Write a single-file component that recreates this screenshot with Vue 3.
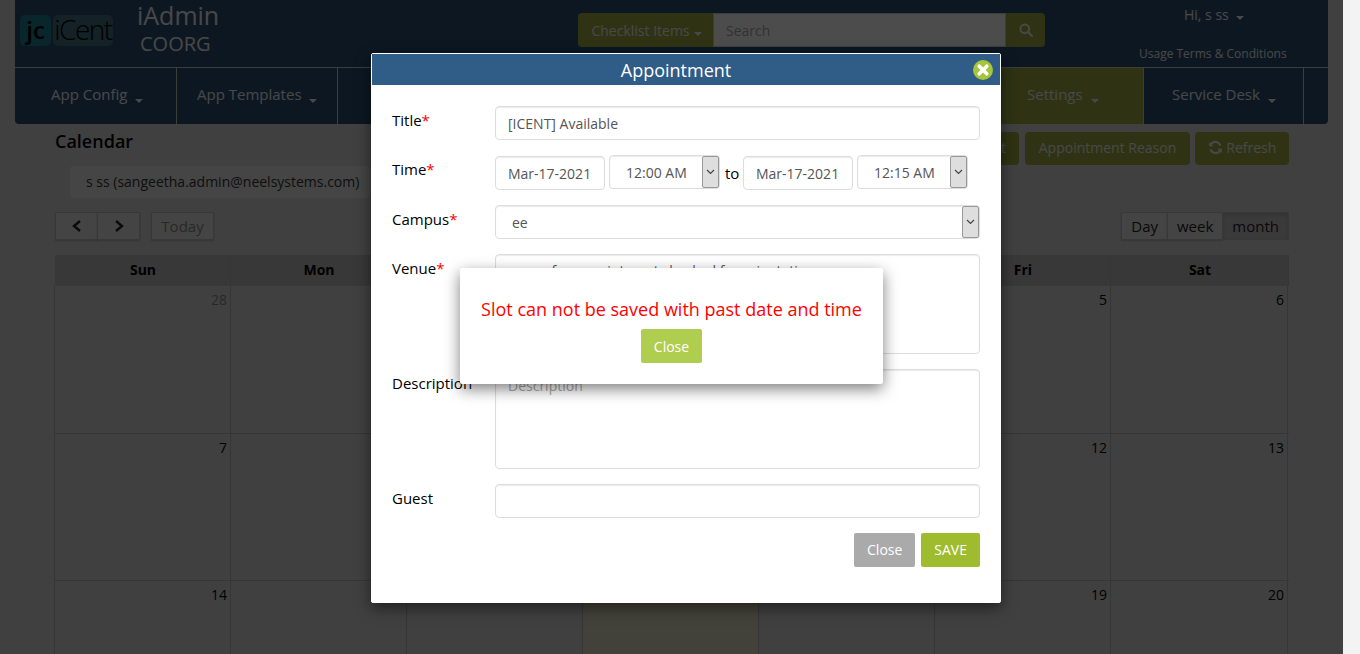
<script setup>
import { computed } from 'vue'

const days = ['Sun', 'Mon', 'Tue', 'Wed', 'Thu', 'Fri', 'Sat']

const weeks = computed(() => {
  const rows = []
  let current = [{ n: 28, muted: true }]
  for (let n = 1; n <= 27; n++) {
    current.push({ n, current: n === 17 })
    if (current.length === 7) {
      rows.push(current)
      current = []
    }
  }
  return rows
})
</script>

<template>
  <div class="screen">
    <div class="page">
      <div class="shell">
        <header class="top">
          <div class="logo">
            <span class="logo-mark">jc</span>
            <span class="logo-name">iCent</span>
          </div>
          <div class="brand">
            <div class="brand-name">iAdmin</div>
            <div class="brand-sub">COORG</div>
          </div>
          <div class="search">
            <button class="search-type">Checklist Items<i class="caret small"></i></button>
            <input class="search-input" placeholder="Search" />
            <button class="search-go">
              <svg width="14" height="14" viewBox="0 0 14 14" fill="none" stroke="currentColor" stroke-width="2">
                <circle cx="5.800" cy="5.800" r="4.400" />
                <path d="M9 9l4 4" stroke-linecap="round" />
              </svg>
            </button>
          </div>
          <div class="user">
            <div class="hi">Hi, s ss <i class="caret small"></i></div>
            <div class="terms">Usage Terms &amp; Conditions</div>
          </div>
        </header>
        <nav class="nav">
          <div class="nav-item first">App Config <i class="caret"></i></div>
          <div class="nav-item second">App Templates <i class="caret"></i></div>
          <div class="nav-hidden"></div>
          <div class="nav-item active">Settings <i class="caret"></i></div>
          <div class="nav-item desk">Service Desk <i class="caret"></i></div>
        </nav>

        <main class="content">
          <div class="title-row">
            <h1>Calendar</h1>
            <div class="actions">
              <button class="olive">Add Appointment</button>
              <button class="olive reason">Appointment Reason</button>
              <button class="olive refresh">
                <svg width="15" height="15" viewBox="0 0 24 24" fill="none" stroke="currentColor" stroke-width="3.400">
                  <path d="M20 9a9 9 0 0 0-15.500-2.500L2.500 9" />
                  <path d="M2 3v7h7" fill="currentColor" stroke="none" />
                  <path d="M4 15a9 9 0 0 0 15.500 2.500l2-2.500" />
                  <path d="M22 21v-7h-7" fill="currentColor" stroke="none" />
                </svg>
                Refresh
              </button>
            </div>
          </div>
          <div class="person">s ss (sangeetha.admin@neelsystems.com)</div>
          <div class="cal-bar">
            <div class="group">
              <button class="cal-btn arrow">
                <svg width="10" height="12" viewBox="0 0 10 12" fill="none" stroke="currentColor" stroke-width="2.400"><path d="M8 1L2 6l6 5" /></svg>
              </button>
              <button class="cal-btn arrow">
                <svg width="10" height="12" viewBox="0 0 10 12" fill="none" stroke="currentColor" stroke-width="2.400"><path d="M2 1l6 5-6 5" /></svg>
              </button>
            </div>
            <button class="cal-btn today-btn">Today</button>
            <div class="group views">
              <button class="cal-btn">Day</button>
              <button class="cal-btn">week</button>
              <button class="cal-btn on">month</button>
            </div>
          </div>
          <div class="calendar">
            <div class="cal-head">
              <div v-for="day in days" :key="day" class="head-cell">{{ day }}</div>
            </div>
            <div v-for="(week, i) in weeks" :key="i" class="week">
              <div
                v-for="cell in week"
                :key="cell.n"
                class="cell"
                :class="{ muted: cell.muted, current: cell.current }"
              >
                {{ cell.n }}
              </div>
            </div>
          </div>
        </main>
      </div>

      <div class="overlay"></div>

      <section class="modal">
        <div class="modal-head">
          <span>Appointment</span>
          <svg class="modal-close" width="20" height="20" viewBox="0 0 20 20">
            <circle cx="10" cy="10" r="10" fill="#a6c53a" />
            <path d="M6.200 6.200l7.600 7.600M13.800 6.200l-7.600 7.600" stroke="#fff" stroke-width="3.600" stroke-linecap="round" />
          </svg>
        </div>
        <div class="modal-body">
          <div class="row first-row">
            <label>Title<b>*</b></label>
            <input class="field grow" value="[ICENT] Available" />
          </div>
          <div class="row time-row">
            <label>Time<b>*</b></label>
            <input class="field date" value="Mar-17-2021" />
            <div class="picker time">
              <span>12:00 AM</span>
              <i class="drop">
                <svg width="9" height="6" viewBox="0 0 9 6" fill="none" stroke="#444" stroke-width="1.200"><path d="M1 1l3.500 3.500L8 1" /></svg>
              </i>
            </div>
            <span class="to">to</span>
            <input class="field date" value="Mar-17-2021" />
            <div class="picker time">
              <span>12:15 AM</span>
              <i class="drop">
                <svg width="9" height="6" viewBox="0 0 9 6" fill="none" stroke="#444" stroke-width="1.200"><path d="M1 1l3.500 3.500L8 1" /></svg>
              </i>
            </div>
          </div>
          <div class="row">
            <label>Campus<b>*</b></label>
            <div class="picker grow campus">
              <span>ee</span>
              <i class="drop">
                <svg width="9" height="6" viewBox="0 0 9 6" fill="none" stroke="#444" stroke-width="1.200"><path d="M1 1l3.500 3.500L8 1" /></svg>
              </i>
            </div>
          </div>
          <div class="row">
            <label>Venue<b>*</b></label>
            <textarea class="field grow area" readonly>venue for appointment checked for orientation</textarea>
          </div>
          <div class="row">
            <label>Description</label>
            <textarea class="field grow area" placeholder="Description"></textarea>
          </div>
          <div class="row">
            <label>Guest</label>
            <input class="field grow" />
          </div>
          <div class="modal-foot">
            <button class="btn grey">Close</button>
            <button class="btn green">SAVE</button>
          </div>
        </div>
      </section>

      <div class="alert">
        <p>Slot can not be saved with past date and time</p>
        <button class="btn lime">Close</button>
      </div>
    </div>
    <div class="scrollbar"></div>
  </div>
</template>

<style>
html,
body {
  margin: 0;
  overflow: hidden;
}
</style>

<style scoped>
* {
  box-sizing: border-box;
  font-family: "Open Sans", "Liberation Sans", sans-serif;
}

button {
  font-size: 14px;
  border: 0;
  cursor: pointer;
}

.screen {
  display: flex;
  width: 1360px;
  height: 654px;
  overflow: hidden;
}

.page {
  position: relative;
  width: 1343px;
  height: 654px;
  overflow: hidden;
  background: #d8d8d8;
}

.scrollbar {
  width: 17px;
  background: #f3f3f3;
}

.shell {
  margin: 0 15px;
}

.top {
  display: flex;
  height: 68px;
  background: #2a4f74;
  color: #f0f0f0;
  border-bottom: 1px solid #ccc;
}

.logo {
  display: flex;
  gap: 2px;
  height: 31px;
  margin: 15px 24px 0 5px;
  color: #000;
}

.logo-mark {
  width: 31px;
  line-height: 29px;
  text-align: center;
  font-size: 24px;
  font-weight: 600;
  border-radius: 5px;
  background: #1d8090;
}

.logo-name {
  width: 60px;
  line-height: 29px;
  text-align: center;
  font-size: 28px;
  font-weight: 300;
  border-radius: 5px;
  background: #44707f;
  letter-spacing: -1.500px;
}

.brand {
  width: 441px;
}

.brand-name {
  font-size: 25px;
  line-height: 30px;
}

.brand-sub {
  font-size: 20px;
  line-height: 27px;
  margin-left: 3px;
}

.search {
  display: flex;
  width: 467px;
  height: 34px;
  margin-top: 13px;
}

.search-type {
  width: 135px;
  padding: 0 0 0 2px;
  color: #f0f0f0;
  background: #9fab45;
  border-radius: 4px 0 0 4px;
}

.search-input {
  width: 293px;
  padding: 0 12px;
  font-size: 14px;
  border: 1px solid #ccc;
  background: #fff;
}

.search-input::placeholder {
  color: #aaa;
}

.search-go {
  width: 39px;
  padding-top: 4px;
  color: #f0f0f0;
  background: #9fab45;
  border-radius: 0 4px 4px 0;
}

.user {
  flex: 1;
  padding-left: 94px;
}

.hi {
  padding-left: 45px;
  margin-top: 5px;
  font-size: 14px;
  line-height: 20px;
}

.terms {
  margin-top: 20px;
  font-size: 12px;
  line-height: 17px;
}

.caret {
  display: inline-block;
  width: 0;
  height: 0;
  margin-left: 4px;
  vertical-align: -3px;
  border-top: 4px solid;
  border-left: 4px solid transparent;
  border-right: 4px solid transparent;
}

.caret.small {
  vertical-align: 0;
}

.nav {
  display: flex;
  height: 56px;
  background: #2a4f74;
  border-radius: 0 0 4px 4px;
  color: #f0f0f0;
}

.nav-item {
  padding-left: 36px;
  font-size: 15px;
  line-height: 52px;
  border-right: 1px solid #ccc;
}

.first {
  width: 162px;
}

.second {
  width: 161px;
  padding-left: 20px;
}

.nav-hidden {
  width: 647px;
}

.active {
  width: 159px;
  padding-left: 42px;
  background: #9fab45;
}

.desk {
  width: 160px;
  padding-left: 28px;
}

.content {
  padding: 8px 39px 0 40px;
}

.title-row {
  display: flex;
  justify-content: space-between;
  height: 34px;
}

h1 {
  margin: 0;
  font-size: 18px;
  font-weight: 600;
  line-height: 18px;
  color: #000;
}

.actions {
  display: flex;
  gap: 6px;
}

.olive {
  height: 33px;
  padding: 0 13px 2px;
  color: #f0f0f0;
  background: #9fab45;
  border-radius: 4px;
}

.reason {
  width: 165px;
  padding: 0 0 2px;
}

.refresh {
  width: 94px;
  padding: 0 0 2px;
  margin-left: -1px;
}

.olive svg {
  vertical-align: -2px;
}

.person {
  width: 300px;
  height: 32px;
  margin-left: 15px;
  padding-left: 16px;
  font-size: 14px;
  line-height: 32px;
  color: #333;
  background: #e8e8e8;
  border-radius: 4px;
  white-space: nowrap;
}

.cal-bar {
  display: flex;
  gap: 11px;
  margin-top: 14px;
}

.group {
  display: flex;
}

.views {
  margin-left: auto;
}

.cal-btn {
  height: 28px;
  padding: 0 9px;
  font-size: 15px;
  color: #222;
  background: #e4e4e4;
  border: 1px solid #bbb;
  box-shadow: 0 1px 2px rgba(0, 0, 0, 0.2);
}

.group .cal-btn + .cal-btn {
  margin-left: -1px;
}

.arrow {
  width: 43px;
  padding: 0;
}

.today-btn {
  width: 63px;
  padding: 0;
  color: #888;
}

.on {
  background: #c4c4c4;
  box-shadow: inset 0 2px 4px rgba(0, 0, 0, 0.15);
}

.calendar {
  margin-top: 15px;
}

.cal-head,
.week {
  display: grid;
  grid-template-columns: repeat(6, 176px) 178px;
}

.head-cell {
  height: 31px;
  padding-left: 1px;
  font-size: 14px;
  font-weight: 700;
  line-height: 30px;
  text-align: center;
  color: #000;
  background: #bbb;
  border-right: 1px solid #b4b4b4;
}

.week {
  height: 147px;
  margin-left: -1px;
  border-bottom: 1px solid #b4b4b4;
}

.week:nth-child(2) {
  height: 148px;
}

.cell {
  padding: 4px 3px;
  font-size: 14px;
  line-height: 20px;
  text-align: right;
  color: #000;
  border-left: 1px solid #b4b4b4;
}

.cell:last-child {
  border-right: 1px solid #b4b4b4;
}

.muted {
  color: #888;
}

.current {
  background: #e2dcc2;
}

.overlay {
  position: absolute;
  inset: 0;
  background: rgba(0, 0, 0, 0.7);
}

.modal {
  position: absolute;
  left: 371px;
  top: 53px;
  width: 630px;
  height: 550px;
  background: #fff;
  border: 1px solid #fff;
  border-radius: 2px;
  box-shadow: 0 5px 15px rgba(0, 0, 0, 0.5);
}

.modal-head {
  position: relative;
  height: 31px;
  padding-right: 20px;
  font-size: 18px;
  line-height: 33px;
  text-align: center;
  color: #fff;
  background: #305c88;
}

.modal-close {
  position: absolute;
  right: 7px;
  top: 6px;
}

.modal-body {
  padding: 21px 20px 0 20px;
}

.row {
  display: flex;
  align-items: flex-start;
  margin-bottom: 15px;
}

.first-row {
  margin-bottom: 16px;
}

label {
  flex: none;
  width: 103px;
  padding-top: 4px;
  font-size: 15px;
  line-height: 20px;
  color: #000;
}

label b {
  font-weight: 400;
  color: #f00;
}

.time-row label {
  padding-top: 3px;
}

.field {
  height: 34px;
  padding: 6px 12px;
  font-size: 14px;
  line-height: 20px;
  color: #555;
  background: #fff;
  border: 1px solid #ddd;
  border-radius: 4px;
  box-shadow: inset 0 1px 1px rgba(0, 0, 0, 0.08);
  outline: none;
  resize: none;
}

.field::placeholder {
  color: #aaa;
}

.grow {
  flex: 1;
  min-width: 0;
}

.date {
  width: 110px;
}

.area {
  height: 100px;
}

.picker {
  display: flex;
  justify-content: space-between;
  height: 34px;
  font-size: 14px;
  line-height: 33px;
  color: #555;
  background: #fff;
  border: 1px solid #ddd;
  border-radius: 4px;
  box-shadow: inset 0 1px 1px rgba(0, 0, 0, 0.08);
}

.time {
  width: 111px;
  height: 34px;
  margin: -1px 0 0 4px;
  padding-left: 16px;
}

.campus {
  padding-left: 16px;
}

.drop {
  display: flex;
  align-items: center;
  justify-content: center;
  width: 17px;
  height: 32px;
  background: #dedede;
  border: 1px solid #999;
  border-radius: 2px;
}

.to {
  width: 23px;
  padding-left: 5px;
  font-size: 15px;
  line-height: 34px;
  color: #000;
}

.modal-foot {
  display: flex;
  justify-content: flex-end;
  gap: 6px;
}

.btn {
  height: 34px;
  padding: 0 13px 2px;
  color: #fff;
  border-radius: 2px;
}

.grey {
  background: #aaa;
}

.green {
  background: #9fbc2f;
}

.alert {
  position: absolute;
  left: 460px;
  top: 268px;
  width: 423px;
  height: 116px;
  padding-top: 29px;
  text-align: center;
  background: #fff;
  border-radius: 2px;
  box-shadow: 0 5px 15px rgba(0, 0, 0, 0.5);
}

.alert p {
  margin: 0 0 7px;
  font-size: 18px;
  line-height: 25px;
  color: #f00;
}

.lime {
  width: 61px;
  padding: 0;
  background: #afcd4f;
}
</style>
